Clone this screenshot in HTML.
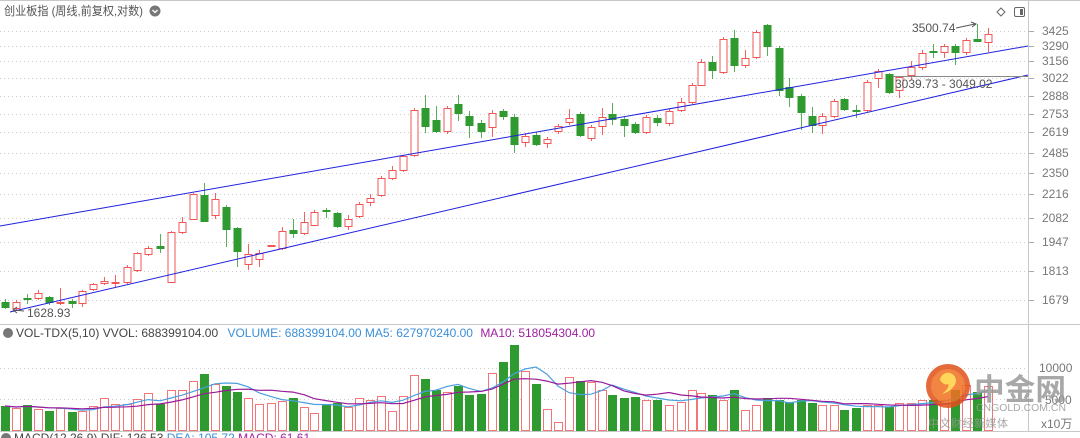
<!DOCTYPE html>
<html><head><meta charset="utf-8">
<style>
html,body{margin:0;padding:0;background:#fff;width:1080px;height:438px;overflow:hidden}
svg{display:block;font-family:"Liberation Sans","Noto Sans CJK SC",sans-serif}
</style></head>
<body>
<svg id="s" width="1080" height="438" xmlns="http://www.w3.org/2000/svg">
<rect width="1080" height="438" fill="#fff"/>
<line x1="0" y1="0.5" x2="1080" y2="0.5" stroke="#c8c8c8"/>
<g id="grid"></g>
<line x1="1028.5" y1="0" x2="1028.5" y2="431" stroke="#c8c8c8"/>
<line x1="0" y1="324.5" x2="1080" y2="324.5" stroke="#c8c8c8"/>
<line x1="0" y1="431.5" x2="1080" y2="431.5" stroke="#c8c8c8"/>
<text x="4" y="15" font-size="12" fill="#555" textLength="139" lengthAdjust="spacingAndGlyphs">创业板指 (周线,前复权,对数)</text>
<circle cx="155" cy="11" r="5.5" fill="#777"/><path d="M152.5 10 L155 12.5 L157.5 10" stroke="#fff" stroke-width="1.3" fill="none"/>
<path d="M1001 8 L1005 12 L1001 16 L997 12 Z" fill="none" stroke="#666"/>
<rect x="1014.5" y="7.5" width="10" height="9" rx="1.5" fill="none" stroke="#666"/><rect x="1020" y="9" width="3" height="6" fill="#666"/>
<g id="ylab" font-size="12" fill="#777"></g>
<g id="candles"></g>
<line x1="0" y1="226" x2="1028" y2="46" stroke="#2020e0" stroke-width="1"/>
<line x1="10" y1="312" x2="1028" y2="75" stroke="#2020e0" stroke-width="1"/>
<line x1="893" y1="76.5" x2="1028" y2="76.5" stroke="#888"/>
<text x="895" y="88" font-size="12" fill="#555">3039.73 - 3049.02</text>
<text x="912" y="32" font-size="12" fill="#555">3500.74</text>
<path d="M956 28 L975 24 M971 22 L976 24 L972 27" stroke="#555" fill="none"/>
<path d="M24 311 L14 310 M17 307 L13 310 L17 313" stroke="#555" fill="none"/>
<text x="27" y="317" font-size="12" fill="#555">1628.93</text>
<circle cx="8" cy="333" r="5" fill="#777"/>
<text x="16" y="337" font-size="12"><tspan fill="#444">VOL-TDX(5,10)  VVOL: 688399104.00  </tspan><tspan fill="#3a8fd8" dx="6">VOLUME: 688399104.00  MA5: 627970240.00  </tspan><tspan fill="#a020a0" dx="4">MA10: 518054304.00</tspan></text>
<g id="vol"></g>
<text x="1039" y="372" font-size="12" fill="#777">10000</text>
<text x="1045" y="404" font-size="12" fill="#777">5000</text>
<text x="1041" y="428" font-size="12" fill="#777">x10万</text>
<text x="14" y="442" font-size="12" fill="#444">MACD(12,26,9)  DIF: 126.53  <tspan fill="#3a8fd8">DEA: 105.72</tspan>  <tspan fill="#a020a0">MACD: 61.61</tspan></text>
<circle cx="6" cy="438" r="5" fill="#777"/>
<g opacity="0.85">
<circle cx="948" cy="386" r="22" fill="#e0501a"/>
<circle cx="948" cy="386" r="17" fill="#f07020"/>
<path d="M940 380 a8 8 0 1 1 14 6 q-4 6 -12 8 q8 -6 6 -10 q-4 2 -8 -4z" fill="#ffd040"/>
<text x="974" y="400" font-size="30" font-weight="bold" fill="#999" font-family="'Noto Sans CJK SC',sans-serif" textLength="92" lengthAdjust="spacingAndGlyphs">中金网</text>
<text x="976" y="411" font-size="10" fill="#999" textLength="90" lengthAdjust="spacingAndGlyphs">CNGOLD.COM.CN</text>
<text x="928" y="427" font-size="11" fill="#999" font-family="'Noto Sans CJK SC',sans-serif" textLength="80" lengthAdjust="spacing">中文财经新媒体</text>
</g>
</svg>
<script>
var NS="http://www.w3.org/2000/svg";
function el(p,t,a){var e=document.createElementNS(NS,t);for(var k in a)e.setAttribute(k,a[k]);p.appendChild(e);return e;}
var grid=document.getElementById('grid'),yl=document.getElementById('ylab');
var gl=[[31,3425],[46,3290],[61,3156],[78,3022],[96,2888],[114,2753],[132,2619],[153,2485],[173,2350],[194,2216],[218,2082],[242,1947],[271,1813],[300,1679]];
gl.forEach(function(g){el(grid,'line',{x1:0,y1:g[0]+.5,x2:1028,y2:g[0]+.5,stroke:'#ccc','stroke-dasharray':'1 3'});el(grid,'line',{x1:1028,y1:g[0]+.5,x2:1034,y2:g[0]+.5,stroke:'#aaa'});var t=el(yl,'text',{x:1042,y:g[0]+4});t.textContent=g[1];});
[368,399].forEach(function(y){el(grid,'line',{x1:0,y1:y+.5,x2:1028,y2:y+.5,stroke:'#ccc','stroke-dasharray':'1 3'});});
var C=[[5,'g',302,307,299,309,406],[16,'r',302,308,300,311,408],[27,'g',298,299,294,304,405],[38,'r',293,298,290,300,409],[49,'g',297,302,296,305,411],[60,'r',302,303,288,305,408],[72,'g',301,303,299,308,412],[82,'r',291,303,290,307,411],[93,'r',284,289,283,291,406],[104,'r',281,283,277,285,398],[115,'r',282,283,275,287,404],[127,'r',267,282,265,284,404],[137,'r',253,270,252,272,399],[148,'r',248,254,246,256,393],[160,'g',246,248,234,253,404],[171,'r',232,282,231,283,390],[182,'r',222,232,217,234,390],[193,'r',194,219,193,220,381],[204,'g',195,221,183,222,374],[215,'r',199,215,193,219,384],[226,'g',207,229,205,247,386],[237,'g',228,251,227,267,392],[248,'r',254,264,244,270,398],[259,'r',253,259,250,267,404],[271,'r',245,246,245,246,403],[282,'r',231,248,227,250,401],[293,'g',230,233,219,238,398],[304,'r',222,233,212,235,407],[314,'r',212,225,210,226,413],[326,'g',210,211,208,218,404],[337,'g',213,226,212,228,403],[348,'r',219,226,215,230,407],[359,'r',204,216,202,218,398],[370,'r',198,202,194,206,400],[381,'r',178,195,176,197,396],[392,'r',170,178,166,180,411],[403,'r',156,170,155,172,396],[414,'r',110,155,108,157,375],[425,'g',108,126,95,133,379],[436,'g',120,131,106,133,390],[447,'r',108,131,106,134,392],[458,'g',104,113,95,121,386],[469,'g',116,125,111,138,395],[481,'g',123,131,120,138,394],[492,'r',113,127,110,137,373],[503,'g',111,116,109,120,362],[514,'g',117,144,114,153,345],[525,'r',136,142,133,147,371],[536,'g',135,144,132,146,384],[547,'r',139,143,137,148,409],[558,'r',126,131,124,134,422],[569,'r',118,122,109,125,377],[580,'g',114,135,112,137,381],[591,'r',127,138,125,141,382],[602,'r',117,126,108,135,390],[612,'g',114,119,103,125,395],[624,'g',119,125,117,137,398],[635,'g',124,132,122,134,397],[646,'r',117,132,115,134,400],[657,'g',118,122,115,126,400],[669,'r',111,123,109,126,405],[681,'r',102,110,98,112,402],[692,'r',85,102,83,104,390],[701,'r',62,85,59,86,393],[712,'g',62,70,56,79,395],[723,'r',39,72,37,74,400],[734,'g',38,65,30,72,390],[745,'r',58,65,50,68,410],[756,'r',32,57,30,59,405],[767,'g',25,46,24,56,398],[779,'g',48,90,46,96,400],[789,'g',87,97,78,107,402],[801,'g',96,112,94,130,400],[812,'g',116,125,107,133,403],[822,'r',116,125,113,134,405],[834,'r',101,116,99,118,405],[844,'g',99,109,98,111,410],[856,'g',110,111,105,118,408],[867,'r',82,110,80,112,405],[878,'r',71,78,69,88,405],[889,'g',74,92,73,94,407],[899,'r',77,90,76,98,403],[911,'r',67,75,61,80,403],[922,'r',53,67,50,70,400],[933,'g',51,52,44,58,400],[944,'r',46,52,44,58,400],[955,'g',46,52,44,65,390],[966,'r',40,52,38,55,385],[977,'g',39,41,24,42,392],[988,'r',34,42,28,52,386]];
var cg=document.getElementById('candles'),vg=document.getElementById('vol');
var RED='#f03a3a',GRN='#2f9a2f';
C.forEach(function(c){var x=c[0],col=c[1]=='r'?RED:GRN;
 var bt=c[2],bb=Math.max(c[3],c[2]+1);
 el(cg,'line',{x1:x+.5,y1:c[4],x2:x+.5,y2:bt,stroke:col,'stroke-opacity':.8});
 el(cg,'line',{x1:x+.5,y1:bb,x2:x+.5,y2:c[5],stroke:col,'stroke-opacity':.8});
 if(c[1]=='r') el(cg,'rect',{x:x-3,y:bt+.5,width:7,height:bb-bt,fill:'#fff',stroke:col,'stroke-opacity':.85});
 else el(cg,'rect',{x:x-3.5,y:bt,width:8,height:bb-bt+1,fill:col});
 if(c[1]=='r') el(vg,'rect',{x:x-3.5,y:c[6]+.5,width:8,height:430-c[6],fill:'#fff',stroke:col,'stroke-opacity':.7});
 else el(vg,'rect',{x:x-4,y:c[6],width:9,height:431-c[6],fill:col});
});
function ma(n,color){var pts=[];for(var i=0;i<C.length;i++){var s=0,k=0;for(var j=Math.max(0,i-n+1);j<=i;j++){s+=430-C[j][6];k++;}pts.push(C[i][0]+','+(430-s/k).toFixed(1));}
 el(vg,'polyline',{points:pts.join(' '),fill:'none',stroke:color,'stroke-width':1.2});}
ma(5,'#4aa0e0');ma(10,'#9a1a9a');
</script>
</body></html>
